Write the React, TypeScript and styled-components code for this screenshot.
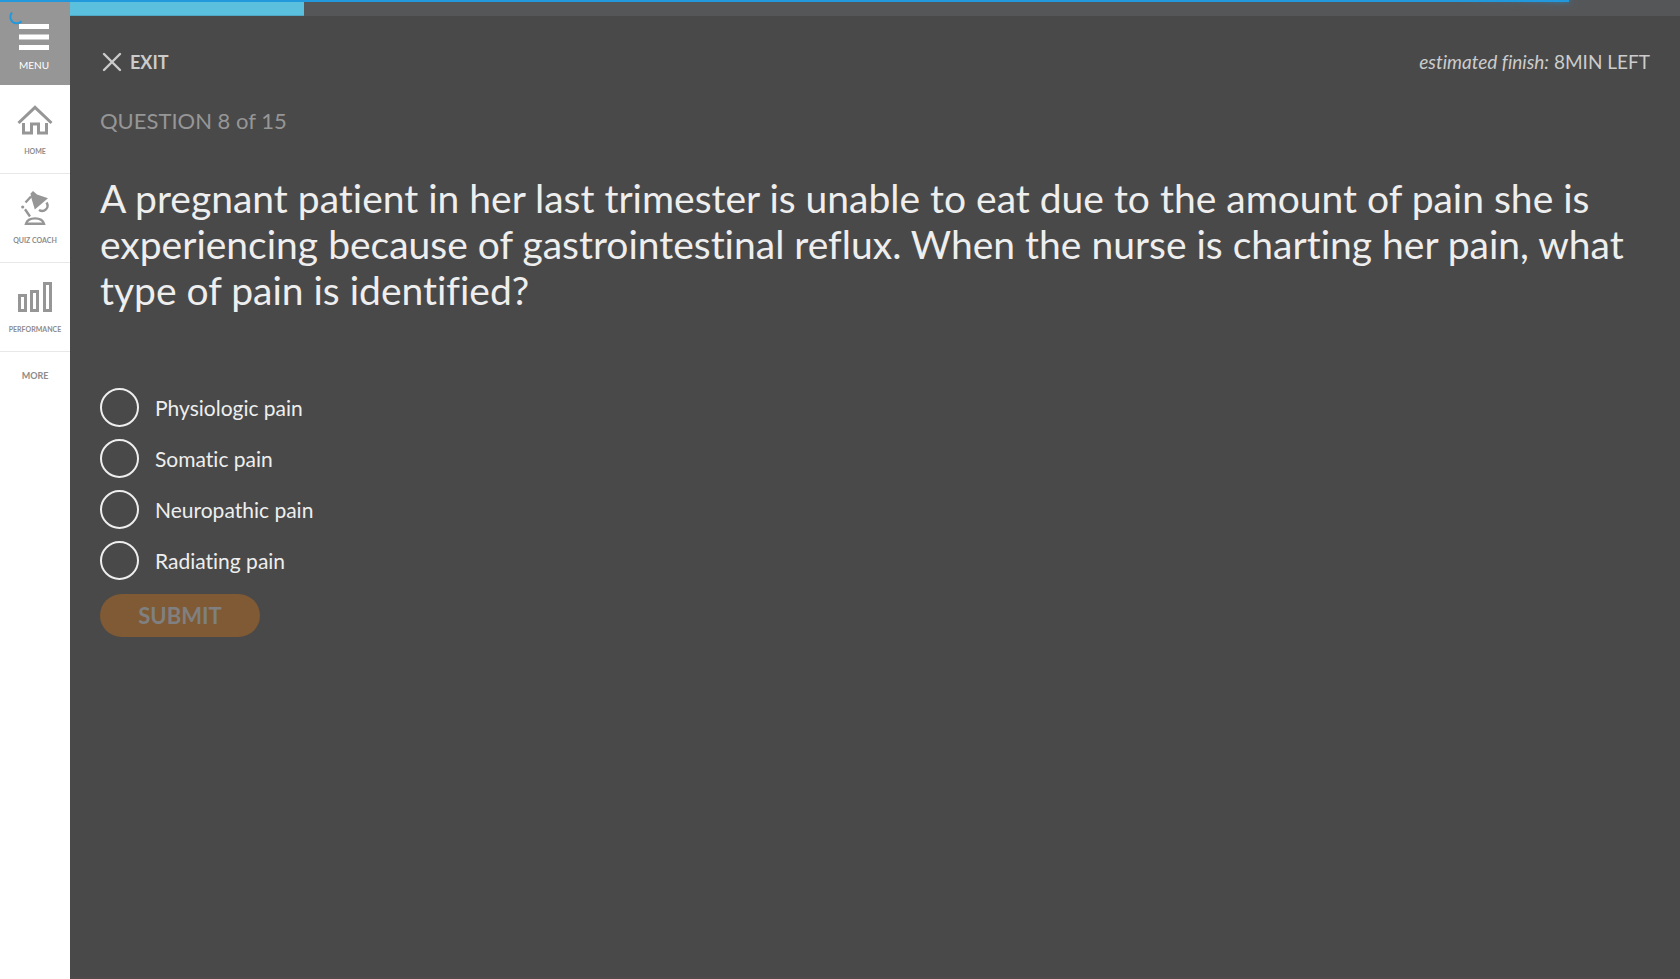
import React, { useState } from "react";
import styled, { createGlobalStyle } from "styled-components";

const GlobalStyle = createGlobalStyle`
  *, *::before, *::after { box-sizing: border-box; }
  body {
    margin: 0;
    background: #494949;
    font-family: Lato, "Open Sans", sans-serif;
    font-variant-ligatures: none;
  }
`;

const Page = styled.div`
  display: flex;
  min-height: 100vh;
`;

const LoadingBar = styled.div`
  position: fixed;
  top: 0;
  left: 0;
  width: 93.4%;
  height: 2px;
  background: #2299dd;
  z-index: 2;

  &::after {
    content: "";
    position: absolute;
    right: 0;
    width: 100px;
    height: 2px;
    box-shadow: 0 0 10px #2299dd, 0 0 5px #2299dd;
    transform: rotate(3deg) translate(0, -4px);
  }
`;

const Spinner = styled.svg`
  position: fixed;
  top: 11px;
  left: 9px;
  z-index: 2;
`;

const Sidebar = styled.nav`
  flex: none;
  width: 70px;
  background: #fff;
`;

const MenuButton = styled.button`
  display: flex;
  flex-direction: column;
  align-items: center;
  gap: 8px;
  width: 100%;
  height: 85px;
  padding: 24px 2px 0 0;
  border: 0;
  background: #969696;
  color: #fff;
  font: 400 10px/14px Lato, sans-serif;
`;

const NavLink = styled.a`
  display: flex;
  flex-direction: column;
  align-items: center;
  gap: 8px;
  height: 89px;
  padding-top: 17px;
  border-bottom: 1px solid #e8e8e8;
  color: #8c8c8c;
  font-size: 7px;
  line-height: 10px;
  font-weight: 700;
  text-decoration: none;
`;

const MoreButton = styled.button`
  width: 100%;
  padding: 18px 0;
  border: 0;
  background: none;
  color: #8c8c8c;
  font: 700 9px/12px Lato, sans-serif;
`;

const Main = styled.main`
  flex: 1;
  min-width: 0;
  border-bottom: 2px solid #4f494b;
`;

const Track = styled.div`
  height: 16px;
  background: #555658;
`;

const Fill = styled.div`
  height: 100%;
  background: #5bc0de;
  border-bottom: 1px solid #4fa8c4;
`;

const Content = styled.div`
  padding: 34px 30px;
`;

const TopRow = styled.header`
  display: flex;
  justify-content: space-between;
  align-items: center;
  height: 24px;
  color: #ccc;
`;

const ExitButton = styled.button`
  display: flex;
  align-items: center;
  gap: 8px;
  padding: 0 0 0 2px;
  border: 0;
  background: none;
  color: inherit;
  font: 700 18px/24px Lato, sans-serif;
`;

const Estimate = styled.p`
  margin: 0;
  font-size: 19px;
  line-height: 24px;
`;

const Counter = styled.p`
  margin: 33px 0 0;
  color: #969696;
  font-size: 22px;
  line-height: 28px;
`;

const Question = styled.h1`
  margin: 40px 0 0;
  color: #eee;
  font-size: 39px;
  line-height: 46px;
  font-weight: 400;
`;

const Options = styled.fieldset`
  display: flex;
  flex-direction: column;
  gap: 12px;
  margin: 75px 0 0;
  padding: 0;
  border: 0;
`;

const Option = styled.label`
  display: flex;
  align-items: center;
  gap: 16px;
  color: #eee;
  font-size: 21px;
  line-height: 24px;
`;

const Radio = styled.input`
  appearance: none;
  width: 39px;
  height: 39px;
  margin: 0;
  border: 2px solid #eee;
  border-radius: 50%;

  &:checked {
    background: radial-gradient(circle, #eee 40%, transparent 44%);
  }
`;

const Submit = styled.button`
  margin: 14px 0 0;
  width: 160px;
  height: 43px;
  padding: 0;
  border: 0;
  border-radius: 22px;
  background: #7f5a34;
  color: #808080;
  font: 700 22px/28px Lato, sans-serif;
`;

const HomeIcon = () => (
  <svg width="36" height="36" viewBox="0 0 36 36" fill="none" stroke="#969696" strokeWidth="3" aria-hidden="true">
    <path d="M1.500 21 18 5.300 34.500 21" />
    <path d="M6.500 21V31H14.500V22H21.500V31H29.500V21" />
  </svg>
);

const LampIcon = () => (
  <svg width="36" height="36" viewBox="0 0 36 36" aria-hidden="true">
    <path d="M13.500 2.500 16 0 20 3.500 31 7.300 17.800 18.500 14.300 6.700Z" fill="#969696" />
    <g fill="none" stroke="#969696" strokeWidth="2.400">
      <path d="M14 5.500 8.500 11.500M8 18.300 13 25.500" />
      <path d="M29.500 11.500C33 17 27 22 22 19" />
      <path d="M9 32.800C11 25.500 25 25.500 27 32.800Z" />
    </g>
    <circle cx="5.700" cy="16" r="1.600" fill="#969696" />
  </svg>
);

const ChartIcon = () => (
  <svg width="36" height="36" viewBox="0 0 36 36" fill="none" stroke="#969696" strokeWidth="3" aria-hidden="true">
    <path d="M2.500 15.500H8.500V30.500H2.500ZM14.500 11.500H20.500V30.500H14.500ZM27.500 3.500H33.500V30.500H27.500Z" />
  </svg>
);

const choices = ["Physiologic pain", "Somatic pain", "Neuropathic pain", "Radiating pain"];

export default function App() {
  const [selected, setSelected] = useState("");
  const progress = 14.55;

  return (
    <>
      <GlobalStyle />
      <LoadingBar />
      <Spinner width="16" height="16" viewBox="0 0 16 16" fill="none" stroke="#2299dd" strokeWidth="2" aria-hidden="true">
        <path d="M3 1.500A6.300 6.300 0 0 0 12.500 10.300" />
      </Spinner>
      <Page>
        <Sidebar aria-label="Main">
          <MenuButton type="button">
            <svg width="30" height="26" viewBox="0 0 30 26" fill="#fff" aria-hidden="true">
              <path d="M0 0H30V5H0ZM0 10.500H30V15.500H0ZM0 21H30V26H0Z" />
            </svg>
            MENU
          </MenuButton>
          <NavLink href="#home"><HomeIcon />HOME</NavLink>
          <NavLink href="#quiz"><LampIcon />QUIZ COACH</NavLink>
          <NavLink href="#performance"><ChartIcon />PERFORMANCE</NavLink>
          <MoreButton type="button">MORE</MoreButton>
        </Sidebar>
        <Main>
          <Track>
            <Fill style={{ width: `${progress}%` }} />
          </Track>
          <Content>
            <TopRow>
              <ExitButton type="button">
                <svg width="20" height="20" viewBox="0 0 20 20" stroke="#ccc" strokeWidth="2.400" strokeLinecap="round" aria-hidden="true">
                  <path d="M2 2 18 18M18 2 2 18" />
                </svg>
                EXIT
              </ExitButton>
              <Estimate><em>estimated finish:</em> 8MIN LEFT</Estimate>
            </TopRow>
            <Counter>QUESTION 8 of 15</Counter>
            <Question>
              A pregnant patient in her last trimester is unable to eat due to the amount of pain she is
              experiencing because of gastrointestinal reflux. When the nurse is charting her pain, what type of
              pain is identified?
            </Question>
            <Options aria-label="Answers">
              {choices.map((choice) => (
                <Option key={choice}>
                  <Radio
                    type="radio"
                    name="answer"
                    checked={selected === choice}
                    onChange={() => setSelected(choice)}
                  />
                  {choice}
                </Option>
              ))}
            </Options>
            <Submit type="submit" disabled={!selected}>SUBMIT</Submit>
          </Content>
        </Main>
      </Page>
    </>
  );
}
